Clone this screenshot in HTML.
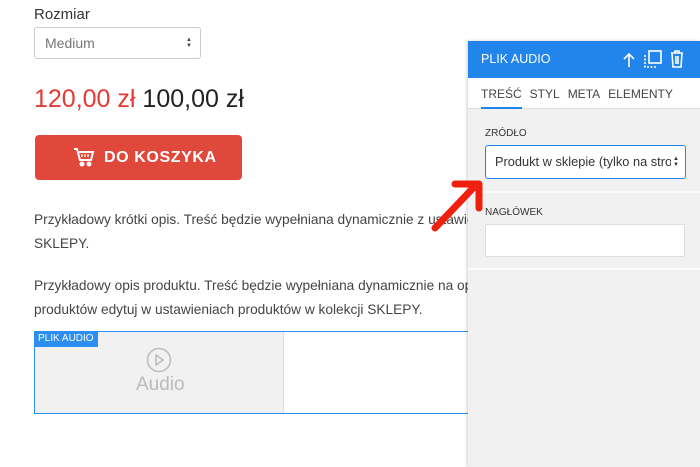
<!DOCTYPE html><html><head><style>
body{margin:0;width:700px;height:467px;position:relative;overflow:hidden;background:#fff;font-family:"Liberation Sans",sans-serif;color:#333}
.a{position:absolute}
</style></head><body>
<div class="a" style="left:34px;top:6px;font-size:15px;color:#333">Rozmiar</div>
<div class="a" style="left:34px;top:27px;border:1px solid #ccc;border-radius:3px;font-size:14px;color:#777;line-height:30px;padding-left:10px;box-sizing:border-box;width:167px;height:32px">Medium</div>
<div class="a" style="left:186px;top:37px;font-size:6px;line-height:6px;color:#444">▲<br>▼</div>
<div class="a" style="left:34px;top:85px;font-size:25px;color:#e53935">120,00 zł <span style="color:#222">100,00 zł</span></div>
<div class="a" style="left:35px;top:135px;width:207px;height:45px;background:#e0483b;border-radius:4px;color:#fff;font-weight:bold;font-size:16px;line-height:45px;letter-spacing:.6px"><svg class="a" style="left:38px;top:12px" width="22" height="20" viewBox="0 0 22 20" fill="none" stroke="#fff" stroke-width="2"><path d="M1 2h3l3 11h11l2-8H6"/><path d="M9 7v3M12 7v3M15 7v3" stroke-width="1.3"/><circle cx="9" cy="17" r="1.5" fill="#fff"/><circle cx="16" cy="17" r="1.5" fill="#fff"/></svg><span style="position:absolute;left:69px">DO KOSZYKA</span></div>
<div class="a" style="left:34px;top:208px;font-size:13.7px;line-height:24px;color:#444;white-space:nowrap">Przykładowy krótki opis. Treść będzie wypełniana dynamicznie z ustawien<br>SKLEPY.</div>
<div class="a" style="left:34px;top:274px;font-size:13.7px;line-height:24px;color:#444;white-space:nowrap">Przykładowy opis produktu. Treść będzie wypełniana dynamicznie na opu<br>produktów edytuj w ustawieniach produktów w kolekcji SKLEPY.</div>
<div class="a" style="left:34px;top:331px;width:440px;height:83px;border:1px solid #2b8ef0;box-sizing:border-box"></div>
<div class="a" style="left:35px;top:332px;width:248px;height:81px;background:#f1f1f1;border-right:1px solid #ddd"></div>
<div class="a" style="left:34px;top:331px;background:#2b8ef0;color:#fff;font-size:10px;padding:2px 4px;line-height:12px">PLIK AUDIO</div>
<svg class="a" style="left:146px;top:347px" width="26" height="26" viewBox="0 0 26 26" fill="none" stroke="#bbb" stroke-width="1.5"><circle cx="13" cy="13" r="11.5"/><path d="M10 8v10l7-5z"/></svg>
<div class="a" style="left:136px;top:374px;font-size:19px;color:#bbb">Audio</div>
<div class="a" style="left:468px;top:41px;width:232px;height:426px;background:#f1f1f1;box-shadow:-1px 0 3px rgba(0,0,0,.2)"></div>
<div class="a" style="left:468px;top:41px;width:232px;height:37px;background:#2185ec;color:#fff;font-size:12.5px;line-height:37px"><span style="margin-left:13px">PLIK AUDIO</span>
<svg class="a" style="left:154px;top:11px" width="14" height="16" viewBox="0 0 14 16" fill="none" stroke="#fff" stroke-width="1.6"><path d="M7 15V2M2 7l5-5 5 5"/></svg>
<svg class="a" style="left:176px;top:9px" width="18" height="18" viewBox="0 0 18 18" fill="none" stroke="#fff" stroke-width="1.6"><rect x="5" y="1" width="12" height="12"/><path d="M1 5v12h12" stroke-dasharray="2 1.5"/></svg>
<svg class="a" style="left:202px;top:9px" width="14" height="18" viewBox="0 0 14 18" fill="none" stroke="#fff" stroke-width="1.6"><path d="M1 3h12M5 3V1h4v2M2 3l1 14h8l1-14M6 6v8M8 6v8"/></svg></div>
<div class="a" style="left:468px;top:78px;width:232px;height:30px;background:#fff;border-bottom:1px solid #ddd;font-size:12px;color:#444;line-height:32px"><span style="margin-left:13px;border-bottom:2px solid #2185ec;padding-bottom:6px">TREŚĆ</span><span style="margin-left:8px">STYL</span><span style="margin-left:8px">META</span><span style="margin-left:8px">ELEMENTY</span></div>
<div class="a" style="left:485px;top:128px;font-size:10px;color:#333">ZRÓDŁO</div>
<div class="a" style="left:485px;top:145px;width:201px;height:34px;background:#fff;border:1px solid #2185ec;border-radius:3px;box-sizing:border-box"><div style="position:absolute;left:9px;top:0;width:176px;overflow:hidden;white-space:nowrap;font-size:12.8px;line-height:32px;color:#333">Produkt w sklepie (tylko na stro</div><span style="position:absolute;right:6px;top:10px;font-size:6px;line-height:6px">▲<br>▼</span></div>
<div class="a" style="left:468px;top:191px;width:232px;height:2px;background:#fafafa"></div>
<div class="a" style="left:485px;top:207px;font-size:10px;color:#333">NAGŁÓWEK</div>
<div class="a" style="left:485px;top:224px;width:200px;height:33px;background:#fff;border:1px solid #ddd;border-radius:2px;box-sizing:border-box"></div>
<div class="a" style="left:468px;top:268px;width:232px;height:2px;background:#fafafa"></div>
<svg class="a" style="left:425px;top:172px" width="65" height="65" viewBox="0 0 65 65"><path d="M10 56L50 14" stroke="#f0200e" stroke-width="7" stroke-linecap="round"/><path d="M30 12h24v24" fill="none" stroke="#f0200e" stroke-width="7" stroke-linecap="round" stroke-linejoin="round"/></svg>
</body></html>
